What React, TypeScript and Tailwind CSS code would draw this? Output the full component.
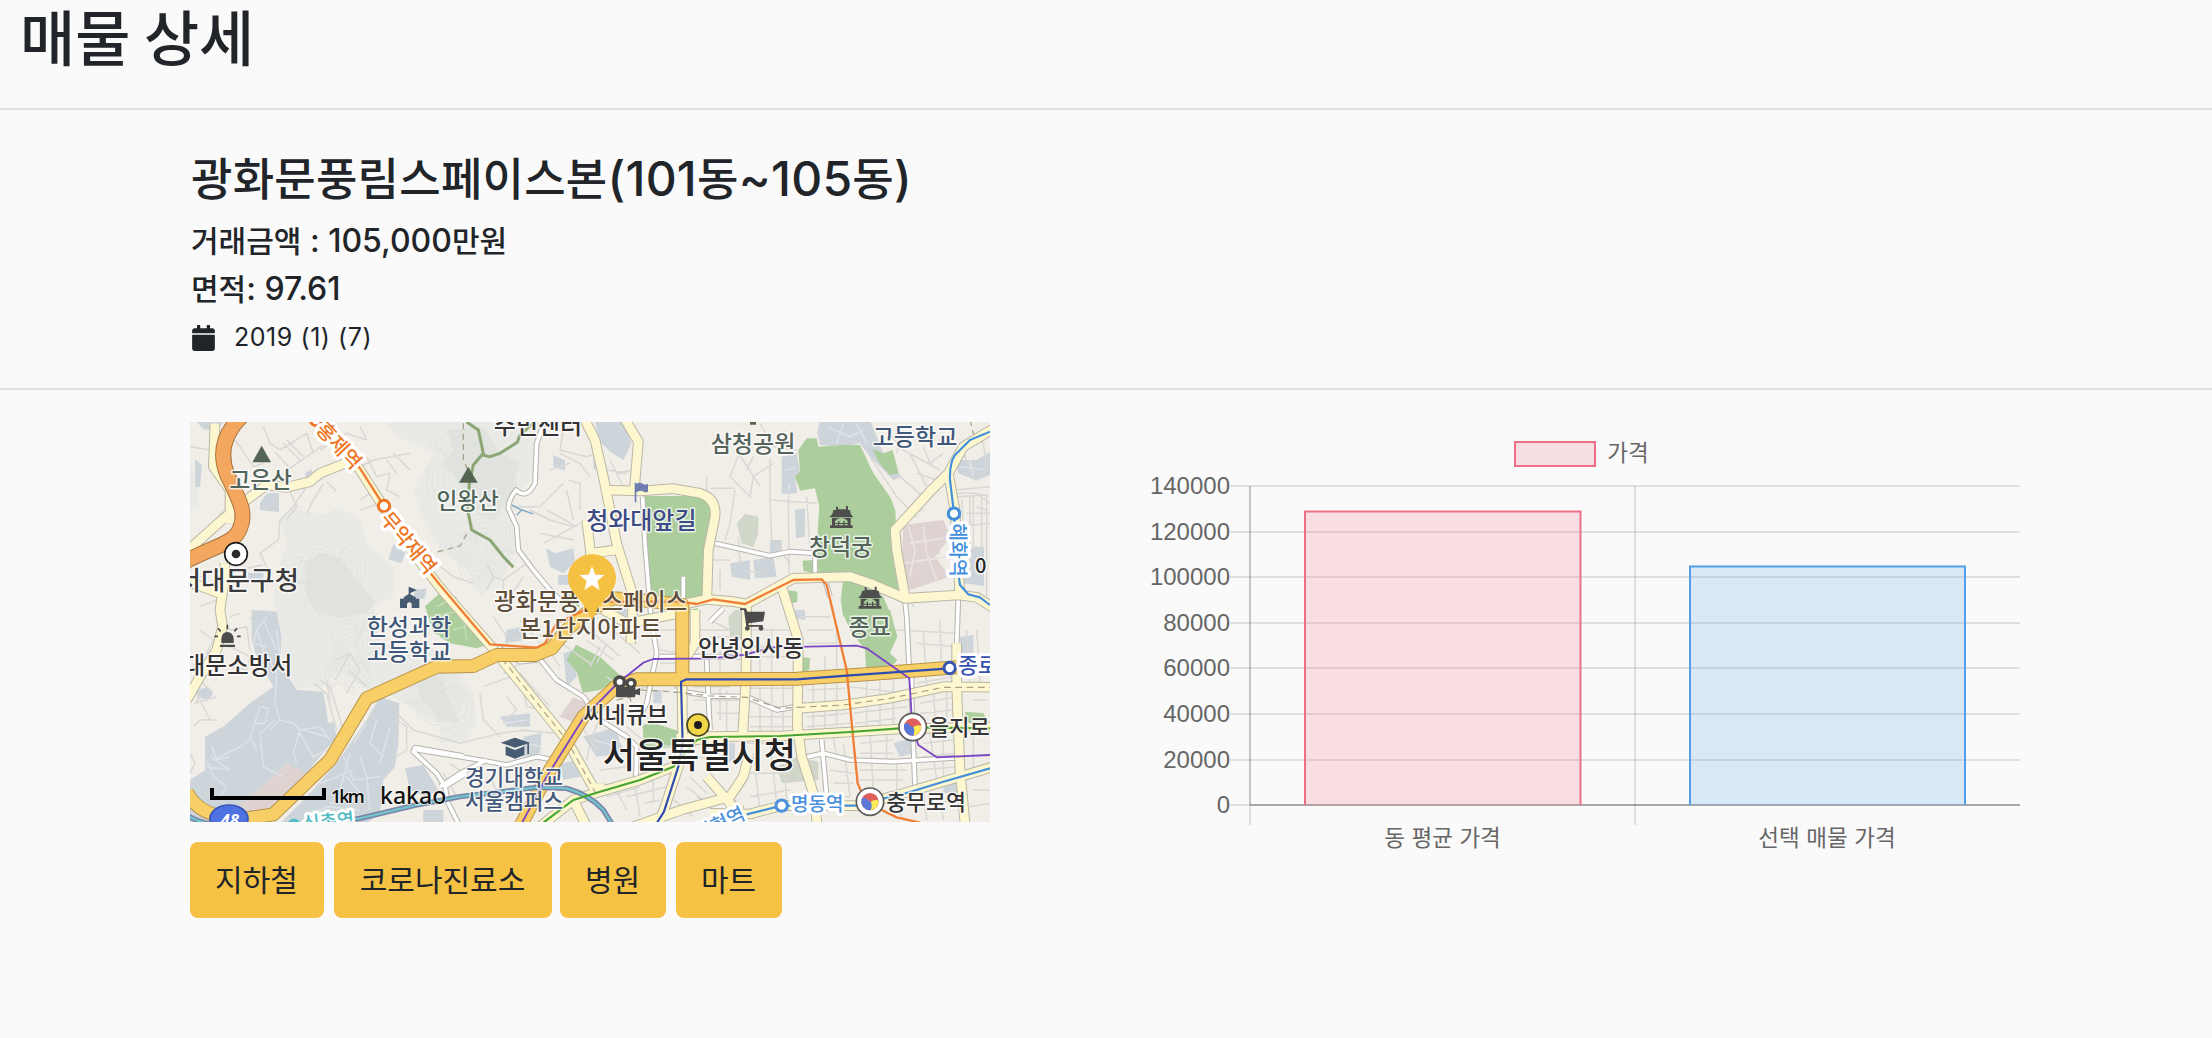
import React from "react";
import { FaCalendar } from "react-icons/fa";

const KR = "font-['Noto_Sans_CJK_KR',sans-serif]";

/* Map: 3 drawing units per CSS pixel, split in six 3x2 tiles. */
type Tile = [number, number];
const A: Tile = [0, 0];
const B: Tile = [780, 0];
const C: Tile = [1590, 0];
const D: Tile = [0, 600];
const E: Tile = [780, 600];
const F: Tile = [1590, 600];

type Shape = { t: Tile; d: string };
const at = (t: Tile) => `translate(${t[0]} ${t[1]})`;

const hills: Shape[] = [
  { t: A, d: "M620 36L1090 36L1060 200L1000 260L1010 400L960 520L900 560L860 480L770 400L720 300L700 240L760 130L650 80Z" },
  { t: A, d: "M300 330L340 295L430 315L480 290L540 330L560 400L640 470L640 560L580 590L600 700L780 720L840 760L870 960L820 950L760 930L700 900L640 860L550 830L480 780L430 830L350 835L310 760L300 650L280 560L295 480L320 400Z" },
  { t: A, d: "M30 160L45 200L60 290L30 300Z" },
  { t: E, d: "M0 180L60 190L100 250L110 340L80 390L0 400Z" },
];
const hillsDark: Shape[] = [
  { t: A, d: "M375 460L420 425L480 445L540 520L585 575L560 610L480 625L400 600L375 540Z" },
  { t: A, d: "M800 60L910 50L960 130L1020 160L990 260L940 330L890 290L830 210L790 160L820 120Z" },
  { t: D, d: "M700 180L770 190L800 250L840 340L780 330L720 260Z" },
];
const campus: Shape[] = [
  { t: D, d: "M215 0L290 10L305 80L300 160L350 240L430 245L445 340L460 335L470 380L370 500L320 460L200 580L180 640L30 640L30 510L75 480L75 380L130 350L210 280L280 230L230 140L215 90Z" },
  { t: D, d: "M600 260L658 280L655 400L645 470L610 510L600 610L560 640L300 640L380 560L470 460L560 330Z" },
  { t: D, d: "M675 475L730 465L775 540L740 560L690 540ZM730 600L790 600L790 636L730 636Z" },
  { t: D, d: "M50 240L85 230L100 250L85 270L50 262Z" },
  { t: A, d: "M45 30L135 30L110 62L70 58ZM45 148L66 165L60 232L46 230ZM240 278L262 250L297 250L297 306L240 300ZM375 190L395 178L400 200L378 206Z" },
  { t: A, d: "M640 402L676 430L664 460L625 448ZM205 488L250 488L250 520L205 510ZM240 600L290 605L295 640L240 640ZM705 540L740 535L735 565L700 570Z" },
  { t: B, d: "M465 30L545 30L575 100L550 150L510 125L480 95L470 60ZM460 136L490 136L490 186L460 176ZM318 415L345 430L400 415L405 455L370 490L330 470ZM354 495L405 495L405 524L354 524ZM340 136L375 150L375 182L340 170ZM535 595L560 595L560 620L535 620Z" },
  { t: C, d: "M330 30L480 30L500 80L520 130L575 200L550 210L480 140L450 100L400 110L330 105L322 70ZM215 140L260 130L270 190L255 200L262 250L215 252ZM735 150L800 150L850 120L850 190L800 212L745 190ZM255 300L285 295L285 380L258 385ZM60 460L120 450L120 510L65 500ZM130 450L190 440L200 500L135 505ZM180 390L215 390L215 430L180 430ZM785 410L822 410L822 528L760 520Z" },
  { t: F, d: "M750 80L790 75L790 130L750 130ZM550 400L600 385L610 430L570 440ZM255 0L285 0L285 30L255 25ZM50 400L75 400L75 450L50 460ZM700 520L745 510L745 545L700 550Z" },
  { t: E, d: "M200 60L250 50L255 90L195 100ZM370 130L400 120L410 200L380 230ZM180 320L270 310L270 350L200 350ZM430 380L530 350L540 400L560 430L470 440ZM250 380L305 370L300 430L250 440ZM640 240L665 240L665 280L640 280ZM360 460L420 450L420 500L370 510Z" },
];
const pinks: Shape[] = [
  { t: D, d: "M180 640L160 600L260 520L320 460L378 490L330 550L290 600Z" },
  { t: C, d: "M580 345L700 330L722 380L675 440L720 500L600 540L575 470Z" },
  { t: E, d: "M358 320L400 262L440 280L410 340Z" },
];
const olives: Shape[] = [
  { t: C, d: "M80 340L105 312L145 320L145 370L130 412L95 400Z" },
  { t: F, d: "M55 20L75 0L95 0L95 90L60 80ZM200 470L260 440L325 455L325 510L215 520Z" },
];
const greens: Shape[] = [
  { t: B, d: "M612 258L790 258L820 300L805 400L795 565L700 572L632 562Z" },
  { t: C, d: "M265 120L290 85L320 85L325 110L400 105L450 105L490 190L540 260L556 300L558 350L545 380L550 450L568 552L480 515L440 495L325 495L322 380L328 290L315 235L270 242L255 200L270 185Z" },
  { t: C, d: "M488 118L520 130L548 120L566 190L540 195L505 155ZM278 452L310 450L310 490L280 482ZM400 508L470 518L520 560L545 620L400 620L392 570ZM235 540L262 545L262 575L245 580ZM760 362L778 365L778 410L765 400Z" },
  { t: F, d: "M395 0L540 0L562 80L540 130L562 150L540 175L468 175L465 120L420 60ZM275 140L300 145L298 180L278 185ZM765 305L820 310L840 345L770 340Z" },
  { t: E, d: "M380 150L408 104L480 140L545 200L480 240L428 248L410 185ZM608 345L640 338L712 362L712 412L612 415ZM0 -10L60 10L140 105L110 115L30 100L0 80Z" },
  { t: D, d: "M735 -12L780 -50L850 10L850 100L760 70Z" },
  { t: B, d: "M350 560L400 550L420 590L370 590ZM740 600L775 595L760 625Z" },
];

const lanes: Shape[] = [
  { t: A, d: "M140 60L180 110L220 170L250 160M30 110L90 120L100 160M250 50L270 100L300 120L380 70L400 130M285 125L330 175L430 105M310 100L360 150M320 90L370 140M420 120L500 70L560 90L540 50M430 220L400 270L380 310M440 215L470 245M540 170L580 150L690 130M560 140L590 200L630 190L620 240L660 260M570 250L540 270M585 285L540 300M620 150L650 190M640 130L690 180M380 230L340 290L300 330L295 390L240 430L265 480M60 590L110 570M40 500L70 500M175 480L250 465M100 340L130 300M250 200L240 260M330 245L350 290L320 330" },
  { t: D, d: "M60 60L100 90L80 130L110 150M30 190L70 150L120 130M120 20L150 60L200 50L210 120M40 160L60 210L90 240M150 110L210 140L200 180L150 170M40 350L60 330L110 330M60 270L90 330M30 430L45 460L30 490M230 0L210 30M150 20L180 10M170 130L190 180M50 230L60 260L45 280L110 260" },
  { t: D, d: "M400 220L440 250L470 360M420 210L450 230L490 360M465 210L510 130L540 180L500 250M440 210L450 270M505 180L560 230M510 130L470 150M640 300L700 360L840 400M650 330L680 350L680 420L650 440" },
  { t: B, d: "M370 60L360 120L440 140L470 130M360 130L420 160L450 200M370 220L300 290L220 290M380 240L400 330M320 300L410 350M300 370L400 390M330 180L390 160M500 180L560 190M510 150L555 240M480 320L530 310M270 300L330 330L400 350M385 210L420 220L420 300M310 400L420 340M140 460L160 500L190 510L190 590M190 510L260 460M160 500L140 540M210 560L250 500M650 590L690 600M800 200L800 240M0 470L40 500L100 520M460 480L520 500M530 190L580 180" },
  { t: C, d: "M80 120L150 230M100 100L60 200L120 260L130 200L190 160M75 240L60 340L45 390M0 235L75 235M180 260L185 390L240 460M235 250L237 490M180 145L180 260M185 270L320 280M150 40L190 110L260 120M290 260L300 420M85 380L90 460M30 480L30 540M130 140L110 180M480 140L560 260L620 320M570 200L640 260M600 130L650 230M530 60L580 120L690 180M580 60L560 130M640 110L660 160L700 130M620 190L680 210M740 260L830 255L830 560M755 270L760 350M780 260L780 400M800 290L830 300M590 400L700 380M600 350L620 430L640 510M640 340L650 400M590 450L690 430M740 350L840 340M760 130L790 190M820 100L830 170M600 560L610 590M10 450L60 450M90 480L170 490" },
  { t: C, d: "M735 240L840 230M740 250L800 250L840 280M770 310L840 310M790 260L790 420M815 250L815 420M650 260L620 290M590 310L640 300" },
  { t: E, d: "M220 90L340 70M240 30L300 100M160 20L200 80M320 110L360 170M350 90L450 160M440 90L520 150M460 70L540 140M480 110L450 170M500 100L470 160M520 60L600 130M190 190L260 150M130 230L240 190L330 290M120 250L130 330L180 380M250 240L260 290L320 300M200 260L230 300L190 340M240 360L340 370M60 400L180 370L260 360M30 460L100 510M10 490L50 560M150 500L190 590M60 560L230 560M450 300L560 300L640 330M500 200L560 250L620 230M560 350L620 400L700 410M480 320L450 400L440 450M420 340L470 420M640 60L720 60M660 120L720 130M660 160L710 160M660 20L720 20M760 60L870 60M760 230L870 230M760 270L870 270M840 120L840 330M520 520L560 600M500 560L600 530M580 490L600 620M640 480L640 580M560 560L680 530M600 500L700 490M610 580L660 570M750 500L800 550M740 530L790 570M690 560L760 620M770 560L850 620M760 440L850 450M480 480L560 470" },
  { t: F, d: "M120 60L260 60M130 110L250 110M120 140L250 140M120 235L250 235M120 320L250 320M120 350L250 350M150 100L150 370M185 60L185 370M220 200L220 370M290 200L410 190M290 240L405 235M290 320L415 310M290 350L420 340M310 200L310 370M345 140L345 370M380 60L380 370M430 215L600 200M430 310L590 290M435 340L560 325M470 180L470 360M510 180L510 360M550 170L550 350M290 60L370 60M290 100L380 100M420 230L580 250M620 170L740 160M620 220L730 200M640 60L650 230M690 30L695 200M560 60L740 70M620 100L740 110M270 20L360 20M630 280L740 260M630 310L730 300M670 250L680 380M710 240L710 360M450 400L550 390M450 430L550 430M480 370L490 540M530 370L530 450M450 480L590 480M450 510L580 510M560 460L560 540M640 400L730 390M640 440L740 430M660 370L680 510M700 360L700 500M630 480L740 470M770 60L780 220M800 60L810 220M770 160L840 150M790 270L830 270M780 380L840 370M790 360L790 470M30 440L70 420M110 400L250 400M110 490L240 490M130 430L150 600M180 400L200 580M220 400L230 580M120 560L240 540M370 380L380 440M400 400L420 560M360 480L430 490M370 520L430 520M350 560L420 560M790 540L840 540M780 590L840 580M600 590L740 570M640 550L650 630M690 550L700 630M560 590L580 630M0 30L60 60M0 80L80 80M20 270L90 270M20 310L90 310M50 240L50 370" },
];
const campusLanes: Shape[] = [
  { t: D, d: "M260 20L230 60L250 120L290 190L285 280L300 330L340 340L360 360L420 350L450 390M290 60L300 140M250 30L290 120M240 290L210 380L230 420M245 290L265 295L255 340L220 340M285 330L240 370L250 470L310 500M360 360L340 430L350 460M360 370L400 440L440 420M80 450L100 500L140 530L120 560M90 440L150 480L80 470M95 410L110 450L150 440M370 360L440 380M210 390L180 410L100 450M300 330L270 360M230 60L220 100L260 110M590 330L570 400L610 440M630 350L600 460M490 440L520 510L600 500M500 500L550 560L450 580M510 430L480 540M560 340L520 400M380 620L440 590L540 600M540 440L560 500L570 600M420 520L520 480" },
  { t: C, d: "M350 50L420 80L460 60M400 40L380 100M440 40L470 100M750 170L830 180M780 150L790 200M225 180L255 175M235 240L240 220" },
  { t: E, d: "M190 340L260 330M460 390L530 410M260 400L300 410" },
];

const whites: Shape[] = [
  { t: B, d: "M315 30L290 100L285 220Q260 270 228 240Q205 270 205 295L230 350L235 420L280 480L330 540L390 600" },
  { t: B, d: "M608 262L615 400L632 610L650 730L620 880L600 915" },
  { t: E, d: "M170 110L240 155L300 148L350 210L430 260L480 330L560 380L590 410L588 500" },
  { t: E, d: "M-76 418L120 450L200 465L290 440L340 450M0 530L60 490L140 450" },
  { t: D, d: "M850 438L705 413L700 425L770 490L795 530L805 580L835 640M795 530L860 490" },
  { t: C, d: "M15 400L180 437L240 425L315 430L315 495" },
  { t: C, d: "M585 575L590 620L597 765L605 810L605 870L615 1130" },
  { t: C, d: "M745 560L738 770" },
  { t: C, d: "M0 635L40 595M345 510L360 560" },
  { t: F, d: "M270 445L340 430L420 450L550 455L760 442M335 390L350 560" },
  { t: F, d: "M-110 240L0 258L110 260L200 300L260 290M-150 140L110 140M-10 150L0 360M-80 -100L-80 180" },
];
const yellows: Shape[] = [
  { t: A, d: "M20 425L120 335L210 262L260 225L320 232L390 215L420 190L500 158M150 230L150 340M105 40L100 170L150 240" },
  { t: A, d: "M135 460L130 530L120 600L128 650L110 720L60 800L20 870M25 515L120 550" },
  { t: A, d: "M420 20L540 180L610 290L700 430L790 545L930 705L1160 990L1250 1150" },
  { t: B, d: "M430 20L465 90L490 200L530 400L580 560L572 700M550 20L595 95L583 240M495 240L600 243L700 236L780 250Q830 265 825 320L805 420L800 580M440 330L452 430L540 418M450 430L455 500" },
  { t: B, d: "M720 585L800 568L880 575L920 582L1060 505L1230 500L1290 520L1395 565L1555 555L1610 562L1670 600" },
  { t: C, d: "M860 50L760 110L715 190L660 245L555 360L560 420L585 560M715 190L735 300L750 560" },
  { t: C, d: "M215 530L265 690L262 950L275 1040L310 1150L322 1245M110 570L108 800L98 980" },
  { t: B, d: "M475 590L560 640L720 610M765 600L765 700L740 740" },
  { t: F, d: "M262 295L400 285L540 265L700 230L850 232M740 100L740 230L750 480L765 640M-100 385L0 380L210 378L420 366L570 357L850 350" },
  { t: E, d: "M300 650L400 570L480 545L600 510L700 470L760 390L870 380M650 650L672 600L715 470L728 400L726 220M400 570L440 650M480 545L480 520M580 650L730 598L870 560L910 500L925 440M800 500L870 580L900 640M860 640L900 580" },
  { t: F, d: "M0 610L120 612L215 587L440 587L580 550L700 515L850 470M60 580L90 620" },
];
const ambers: Shape[] = [
  { t: A, d: "M20 1145Q60 1230 200 1225L280 1213L450 1050L560 865L770 770L880 768L950 735L1065 735L1115 715L1160 660L1230 600L1300 565L1400 572L1507 585L1507 800" },
  { t: A, d: "M1015 1260L1110 1080L1210 920L1310 828L1370 808L1640 808L1850 806L2070 792L2330 772" },
];

const Mass = ({ shapes, fill }: { shapes: Shape[]; fill: string }) => (
  <g fill={fill}>
    {shapes.map((s, i) => (
      <path key={i} d={s.d} transform={at(s.t)} />
    ))}
  </g>
);

const Roads = ({ shapes, edge, color, w }: { shapes: Shape[]; edge?: string; color: string; w: number }) => (
  <g fill="none" strokeLinejoin="round">
    {edge && shapes.map((s, i) => <path key={"e" + i} d={s.d} transform={at(s.t)} stroke={edge} strokeWidth={w + 6} />)}
    {shapes.map((s, i) => (
      <path key={i} d={s.d} transform={at(s.t)} stroke={color} strokeWidth={w} />
    ))}
  </g>
);

const contour =
  "M-90 -60Q-70 -50 -60 -72T-40 -85Q-15 -90 0 -70T40 -90Q60 -85 66 -66T85 -50Q95 -25 78 -10T100 30Q90 60 60 62T20 60Q0 65 -20 90T-65 65Q-80 45 -60 20T-100 0Q-110 -30 -90 -60Z";
const peaks = [
  [455, 520, 1.15, 1.35],
  [870, 190, 1.5, 1.3],
  [900, 420, 1, 1.2],
  [520, 730, 1.3, 0.9],
  [760, 860, 0.8, 0.9],
];

type L = { s: string; x: number; y: number; z: number; c: string; a?: "start" | "end"; r?: number; h?: number };
const labels: L[] = [
  { s: "고은산", x: 245, y: 235, z: 68, c: "#51655a" },
  { s: "홍제역", x: 478, y: 110, z: 60, c: "#ee7523", r: 47, h: 20 },
  { s: "무악재역", x: 687, y: 402, z: 60, c: "#ee7523", r: 50, h: 20 },
  { s: "인왕산", x: 866, y: 297, z: 68, c: "#51655a" },
  { s: "서대문구청", x: 360, y: 540, z: 80, c: "#3a3a3c", a: "end" },
  { s: "주민센터", x: 1077, y: 72, z: 72, c: "#333333" },
  { s: "청와대앞길", x: 1387, y: 356, z: 72, c: "#3d4b84" },
  { s: "광화문풍림스페이스", x: 1235, y: 600, z: 70, c: "#5f4e3a" },
  { s: "본1단지아파트", x: 1235, y: 682, z: 70, c: "#5f4e3a" },
  { s: "삼청공원", x: 1722, y: 125, z: 69, c: "#55645b" },
  { s: "고등학교", x: 2208, y: 104, z: 69, c: "#42587a" },
  { s: "창덕궁", x: 1985, y: 434, z: 69, c: "#55645b" },
  { s: "종묘", x: 2072, y: 674, z: 69, c: "#55645b" },
  { s: "0", x: 2405, y: 490, z: 60, c: "#222222" },
  { s: "대문소방서", x: 340, y: 793, z: 71, c: "#333333", a: "end" },
  { s: "한성과학", x: 690, y: 674, z: 69, c: "#42587a" },
  { s: "고등학교", x: 690, y: 750, z: 69, c: "#42587a" },
  { s: "안녕인사동", x: 1716, y: 739, z: 69, c: "#333333" },
  { s: "씨네큐브", x: 1340, y: 940, z: 69, c: "#333333" },
  { s: "서울특별시청", x: 1561, y: 1073, z: 105, c: "#222222" },
  { s: "경기대학교", x: 1005, y: 1124, z: 64, c: "#42587a" },
  { s: "서울캠퍼스", x: 1005, y: 1197, z: 64, c: "#42587a" },
  { s: "종로", x: 2338, y: 790, z: 64, c: "#3653b0", a: "start", h: 18 },
  { s: "을지로", x: 2250, y: 976, z: 66, c: "#333333", a: "start" },
  { s: "충무로역", x: 2241, y: 1199, z: 65, c: "#333333" },
  { s: "명동역", x: 1915, y: 1202, z: 57, c: "#4a90dc", h: 18 },
  { s: "회현역", x: 1622, y: 1240, z: 57, c: "#4a90dc", r: -25, h: 18 },
  { s: "신촌역", x: 448, y: 1234, z: 56, c: "#4fbcc4", r: -5, h: 18 },
];

const Palace = ({ x, y }: { x: number; y: number }) => (
  <g transform={`translate(${x} ${y})`} fill="#4e4e4e">
    <path d="M12 12h8V2h6v8h24V0h6v12h6q0 12 10 22H0Q12 24 12 12Z" />
    <path d="M8 36h9v22H8zM55 36h9v22h-9zM17 46q8-10 19-10t19 10v-10H17zM26 45h4v13h-4zM42 45h4v13h-4zM2 58h68v8H2zM14 51h44v3H14z" />
  </g>
);

const Transfer = ({ x, y }: { x: number; y: number }) => (
  <g transform={`translate(${x} ${y})`}>
    <circle r="41" fill="#fff" stroke="#5b5b5b" strokeWidth="5" />
    <circle r="26" fill="#e05f5c" />
    <path d="M-24 -10A26 26 0 0 0 2 26Q14 8 2 0Q-8 -2 -12 -10Q-18 -14 -24 -10Z" fill="#5978d8" />
    <path d="M2 26A26 26 0 0 0 25 -4Q12 -8 2 0Q8 10 2 26Z" fill="#fbec57" />
  </g>
);

const rail = { fill: "none", strokeLinejoin: "round" as const };
const freeway = "M200 5Q100 90 142 195C180 275 200 310 180 355C165 400 110 405 15 455";
const gyeongui = "M20 1215Q90 1262 300 1262L540 1225L700 1187L840 1160L1070 1132L1160 1135Q1230 1155 1270 1200L1298 1245";

function KakaoMap() {
  return (
    <svg viewBox="30 36 2400 1200" className="block h-[400px] w-[800px] overflow-hidden">
      <rect x="30" y="36" width="2400" height="1200" fill="#f1eee8" />
      <Mass shapes={hills} fill="#e9eae6" />
      <Mass shapes={hillsDark} fill="#e1e3df" />
      <g fill="none" stroke="#dddfdb">
        {peaks.map(([x, y, sx, sy], i) =>
          [1, 0.87, 0.74, 0.61, 0.48, 0.35, 0.2].map((k) => (
            <path
              key={i + "-" + k}
              d={contour}
              vectorEffect="non-scaling-stroke"
              strokeWidth="0.7"
              transform={`translate(${x} ${y}) rotate(${i * 37}) scale(${sx * k} ${sy * k})`}
            />
          ))
        )}
        <g strokeWidth="2">
          {[0, 1, 2, 3, 4].map((k) => (
            <path key={k} transform={`translate(780 600) translate(0 ${k * 40}) scale(${1 - k * 0.17})`} d="M-10 195L50 200L70 240L100 270L90 330L60 350L40 380L-10 390" />
          ))}
        </g>
      </g>
      <Mass shapes={campus} fill="#cdd4da" />
      <Mass shapes={pinks} fill="#ded3d1" />
      <Mass shapes={olives} fill="#d1d7c8" />
      <Mass shapes={greens} fill="#abce9c" />
      <path d="M800 570L850 640M760 620L850 600M820 660L880 640M770 590L830 560M860 690L850 620" fill="none" stroke="#c5dfba" strokeWidth="4" />
      <Roads shapes={lanes} color="#dad8d4" w={4.5} />
      <Roads shapes={campusLanes} color="#dde2e6" w={5} />
      <path d="M2185 350L2205 420L2190 500M2190 400L2290 385M2230 350L2240 430L2270 510M2170 460L2300 440" fill="none" stroke="#ece4e1" strokeWidth="5" />
      <g {...rail} stroke="#8ba673" strokeWidth="9">
        <path d="M860 36L895 60L910 130L880 165L868 220L863 300L875 360L930 390L970 440L1000 472" />
        <path d="M910 136L930 140L960 130L1012 97L1020 75L1070 30" />
      </g>
      <g {...rail} stroke="#a39a80" strokeWidth="3.5" strokeDasharray="18 13">
        <path d="M850 40L850 150L868 190M860 372L840 408L775 425L740 450M2370 30L2380 70L2410 100" />
      </g>
      <path d="M995 285L1020 298L1060 312M1010 315L1025 300" stroke="#8ab0c9" strokeWidth="5" fill="none" />

      <Roads shapes={whites} edge="#b6b3ae" color="#ffffff" w={11} />
      <Roads shapes={yellows} edge="#b9b6a8" color="#fdf7cf" w={26} />
      <path
        d="M945 720L1160 990L1245 1145M1855 892L1990 885L2130 865L2290 832L2430 832M1380 840L1480 845L1590 858L1700 862L1800 895L1855 892M1310 870L1350 862L1355 885"
        fill="none"
        stroke="#aa9f84"
        strokeWidth="3.5"
        strokeDasharray="20 14"
      />
      <Roads shapes={ambers} edge="#b8944a" color="#f8cf66" w={36} />
      <g {...rail}>
        <path d={freeway} stroke="#a8743f" strokeWidth="48" />
        <path d={freeway} stroke="#f3a75f" strokeWidth="42" />
      </g>

      <g {...rail} strokeWidth="5.5">
        <path d={gyeongui} stroke="#7a83a8" strokeWidth="16" />
        <path d={gyeongui} stroke="#72c3ca" strokeWidth="7" />
        <path d="M400 20L540 175L610 285L700 425L780 525L930 703L1070 713L1095 700L1130 640L1215 600L1240 575L1500 575L1550 582L1600 568L1695 582L1840 510L1925 508L1940 525L2000 780L2020 990L2033 1120L2050 1160L2105 1200L2150 1222L2220 1238" stroke="#f07f36" strokeWidth="7" />
        <path d="M1020 1250L1100 1100L1210 925L1310 822L1390 758L1420 747L1590 745L1690 735L1780 712L2030 707L2060 715L2188 805L2197 950L2215 1005L2270 1042L2430 1035" stroke="#7a46c4" />
        <path d="M1090 1238L1180 1170L1260 1145L1380 1110L1480 1070L1550 990L1590 981L1800 978L2010 966L2200 952L2430 955" stroke="#47a52f" strokeWidth="6.5" />
        <path d="M1430 1240L1452 1205L1495 1070L1508 1000L1503 815L1520 808L1850 808L2010 796L2310 775" stroke="#2f4db0" strokeWidth="6.5" />
        <path d="M2430 65L2370 90L2325 135Q2308 160 2310 210L2322 310L2335 490L2340 525L2365 553L2400 562L2430 585" stroke="#428fdc" strokeWidth="6.5" />
        <path d="M1700 1213L1805 1187L2030 1187L2070 1175L2170 1152L2290 1115L2430 1075" stroke="#428fdc" strokeWidth="6.5" />
      </g>
      <g fill="#fff" strokeWidth="9">
        <circle cx="408" cy="30" r="17" stroke="#ee7523" />
        <circle cx="612" cy="288" r="17" stroke="#ee7523" />
        <circle cx="2322" cy="311" r="17" stroke="#428fdc" />
        <circle cx="2309" cy="774" r="17" stroke="#3653b0" />
        <circle cx="1805" cy="1187" r="17" stroke="#4a90dc" />
        <circle cx="342" cy="1248" r="17" stroke="#4fbcc4" />
      </g>

      <g className="font-['Noto_Sans_CJK_KR',sans-serif] font-medium" strokeLinejoin="round">
        {labels.map((l, i) => (
          <text
            key={i}
            transform={l.r ? `rotate(${l.r} ${l.x} ${l.y})` : undefined}
            x={l.x - 3}
            y={l.r ? l.y + 20 : l.y}
            fontSize={l.z}
            fill={l.c}
            textAnchor={l.a ?? "middle"}
            stroke="#fff"
            strokeOpacity={l.h ? 1 : 0.75}
            strokeWidth={l.h ?? 9}
            paintOrder="stroke"
          >
            {l.s}
          </text>
        ))}
        <text transform="translate(2333 420) rotate(90)" y="20" fontSize="58" fill="#428fdc" textAnchor="middle" stroke="#fff" strokeWidth="20" paintOrder="stroke">
          혜화역
        </text>
      </g>

      <path d="M245 107L273 157H217ZM865 170L893 218H837ZM1710 30H1728V44H1710Z" fill="#556553" />
      <circle cx="168" cy="432" r="34" fill="#fff" stroke="#1c1c1c" strokeWidth="5" />
      <circle cx="168" cy="432" r="13" fill="#2a2a2a" />
      <circle cx="1554" cy="945" r="33" fill="#f1d648" stroke="#4a4420" strokeWidth="5" />
      <circle cx="1554" cy="945" r="12" fill="#1c1c1c" />
      <g fill="#475b73">
        <path d="M686 530L711 540L691 549V553L707 562V566H718V594H695V581Q688 573 681 581V594H660V566H671V562L686 552Z" />
        <path d="M1005 983L1050 998L1005 1013L962 998ZM977 1009L1005 1020L1033 1009V1035L1005 1046L977 1035ZM1042 1001L1047 999V1032H1042Z" />
      </g>
      <path d="M1364 218H1369V221Q1380 216 1388 221T1404 221V245Q1396 249 1388 244T1369 247V277H1364Z" fill="#6f7cb0" />
      <g fill="#4b4b4b">
        <path d="M120 711V704H165V711ZM124 699V686Q126 667 142 666Q159 667 161 686V699Z" />
        <path d="M142 644V657M114 655L122 664M171 655L163 664M103 679H114M182 679H171" stroke="#4b4b4b" strokeWidth="5" />
        <path d="M1680 595H1698L1702 605H1755L1750 634L1706 640V645H1748V650H1699L1692 600H1680Z" />
        <circle cx="1702" cy="655" r="7" />
        <circle cx="1743" cy="655" r="7" />
        <circle cx="1319" cy="816" r="20" />
        <circle cx="1353" cy="820" r="17" />
        <rect x="1308" y="830" width="58" height="32" rx="4" />
        <path d="M1364 841L1380 834V856L1364 852Z" />
      </g>
      <circle cx="1319" cy="816" r="9" fill="#fff" />
      <circle cx="1353" cy="820" r="7" fill="#fff" />
      <Palace x={1948} y={288} />
      <Palace x={2034} y={530} />
      <Transfer x={2198} y={951} />
      <Transfer x={2070} y={1175} />

      <ellipse cx="147" cy="1226" rx="57" ry="41" fill="#4f72e3" stroke="#3a55b8" strokeWidth="5" />
      <text x="149" y="1247" fontSize="50" fill="#fff" textAnchor="middle" className="font-['Noto_Sans'] font-bold italic">
        48
      </text>
      <path d="M96 1134V1164H432V1134" fill="none" stroke="#000" strokeWidth="12" />
      <text x="453" y="1179" fontSize="53" fill="#111" stroke="#fff" strokeOpacity=".6" strokeWidth="6" paintOrder="stroke" textLength="101" className="font-['Noto_Sans'] font-semibold">
        1km
      </text>
      <text x="600" y="1181" fontSize="73" fill="#111" stroke="#fff" strokeOpacity=".6" strokeWidth="6" paintOrder="stroke" textLength="199" lengthAdjust="spacingAndGlyphs" className="font-['Noto_Sans'] font-medium">
        kakao
      </text>

      <path d="M1236 433C1276 433 1308 465 1308 504C1308 532 1292 548 1276 567Q1248 598 1236 632Q1224 598 1196 567C1180 548 1164 532 1164 504C1164 465 1196 433 1236 433Z" fill="#f5c142" />
      <path d="M1236 468L1246 494L1273 495L1252 513L1259 540L1236 525L1213 540L1220 513L1199 495L1226 494Z" fill="#fff" />
    </svg>
  );
}

const ticks: [string, number][] = [
  ["140000", 486],
  ["120000", 532],
  ["100000", 577],
  ["80000", 623],
  ["60000", 668],
  ["40000", 714],
  ["20000", 760],
  ["0", 805],
];

function PriceChart() {
  return (
    <svg viewBox="1140 422 890 446" className="block h-[446px] w-[890px]">
      <g fill="none" stroke="#000" strokeWidth="2">
        {ticks.map(([t, y]) => (
          <path key={t} d={`M1230 ${y}H2020`} strokeOpacity="0.1" />
        ))}
        <path d="M1250 486V825M1635 486V825" strokeOpacity="0.1" />
        <path d="M1250 486V805" strokeOpacity="0.12" />
        <path d="M1250 805H2020" strokeOpacity="0.25" />
      </g>
      <rect x="1305" y="511.5" width="275.5" height="293.5" fill="#ee6e87" fillOpacity="0.2" />
      <path d="M1305 805V511.5H1580.5V805" fill="none" stroke="#ee6e87" strokeWidth="2" />
      <rect x="1690" y="566.5" width="275" height="238.5" fill="#529fe5" fillOpacity="0.2" />
      <path d="M1690 805V566.5H1965V805" fill="none" stroke="#529fe5" strokeWidth="2" />
      <rect x="1515" y="442" width="80" height="24" fill="#f6dee2" stroke="#ee6e87" strokeWidth="2" />
      <g fill="#666" fontSize="24" textAnchor="end" className="font-['Liberation_Sans']">
        {ticks.map(([t, y]) => (
          <text key={t} x="1230" y={y + 8}>
            {t}
          </text>
        ))}
      </g>
      <g fill="#666" fontSize="22.5" textAnchor="middle" className="font-['Noto_Sans_CJK_KR',sans-serif]">
        <text x="1628" y="461">가격</text>
        <text x="1442.5" y="846" wordSpacing="1.5">동 평균 가격</text>
        <text x="1827" y="846" wordSpacing="1.5">선택 매물 가격</text>
      </g>
    </svg>
  );
}

const buttons = ["지하철", "코로나진료소", "병원", "마트"];
const margins = ["", "ml-[10px]", "ml-[8px]", "ml-[10px]"];
const widths = ["w-[134px]", "w-[218px]", "w-[106px]", "w-[106px]"];

const K = ({ children, className }: { children: React.ReactNode; className: string }) => (
  <span className={`${KR} ${className}`}>{children}</span>
);

export default function App() {
  return (
    <main className="flex h-[1038px] w-[2212px] flex-col overflow-hidden bg-[#fafafa] font-['Inter'] text-[#212529]">
      <header className="h-[110px] border-b-2 border-[#e1e1e1] pl-[20px]">
        <h1 className={`${KR} text-[60px] leading-[70px] font-medium`}>매물 상세</h1>
      </header>
      <section className="flex h-[280px] flex-col border-b-2 border-[#e1e1e1] pl-[191px] font-medium">
        <h2 className="mt-[35px] h-[64px] text-[48px] leading-[64px] tracking-[0.25px] whitespace-nowrap">
          <K className="text-[45px]">광화문풍림스페이스본</K>(101<K className="text-[45px]">동</K>~105<K className="text-[45px]">동</K>)
        </h2>
        <p className="mt-[6px] h-[48px] text-[32px] leading-[48px] whitespace-nowrap">
          <K className="text-[30px]">거래금액</K> : 105,000<K className="text-[30px]">만원</K>
        </p>
        <p className="h-[48px] text-[32px] leading-[48px] whitespace-nowrap">
          <K className="text-[30px]">면적</K>: 97.61
        </p>
        <p className="mt-[3px] flex h-[48px] items-center gap-[19px] pl-[1px] text-[25px] font-normal">
          <FaCalendar className="h-[26px] w-[23px]" />
          <span className="tracking-[0.55px] whitespace-nowrap">2019 (1) (7)</span>
        </p>
      </section>
      <section className="flex gap-[150px] pt-[32px] pl-[190px]">
        <div className="w-[800px]">
          <KakaoMap />
          <div className="mt-[20px] flex">
            {buttons.map((b, i) => (
              <button key={b} className={`${KR} ${margins[i]} ${widths[i]} h-[76px] rounded-[8px] bg-[#f5c244] pr-[1px] pb-[4px] text-[30px] leading-[72px] whitespace-nowrap`}>
                {b}
              </button>
            ))}
          </div>
        </div>
        <PriceChart />
      </section>
    </main>
  );
}
